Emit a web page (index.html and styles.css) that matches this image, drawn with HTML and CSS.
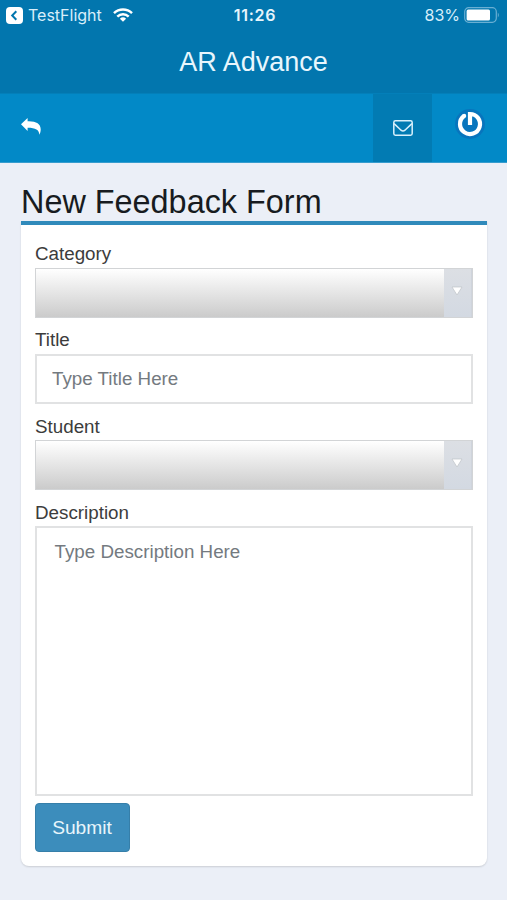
FILE: index.html
```html
<!DOCTYPE html>
<html lang="en">
<head>
<meta charset="utf-8">
<title>AR Advance</title>
<link rel="stylesheet" href="styles.css">
</head>
<body>
<header class="top">
  <div class="status">
    <div class="status-left">
      <svg class="back-app" viewBox="0 0 17 17"><rect width="17" height="17" rx="4" fill="#fff"/><path d="M10.300 4.300 6.200 8.500l4.100 4.200" fill="none" stroke="#0276ae" stroke-width="2"/></svg>
      <span class="app">TestFlight</span>
      <svg class="wifi" viewBox="0 0 20 14"><g fill="none" stroke="#fff" stroke-width="2.5"><path d="M1 5.100a13 13 0 0 1 18 0"/><path d="M4.300 8.600a8.200 8.200 0 0 1 11.400 0"/></g><path d="M6.900 10.700a4.600 4.600 0 0 1 6.200 0L10 13.800z" fill="#fff"/></svg>
    </div>
    <span class="clock">11:26</span>
    <div class="status-right">
      <span class="percent">83%</span>
      <svg class="battery" viewBox="0 0 36 16"><rect x=".7" y=".7" width="31.6" height="14.6" rx="4" fill="none" stroke="#69afd3" stroke-width="1.2"/><rect x="2.6" y="2.6" width="23.4" height="10.8" rx="1.5" fill="#fff"/><path d="M33.800 5.500q2 2.500 0 5z" fill="#69afd3"/></svg>
    </div>
  </div>
  <h1 class="brand">AR Advance</h1>
</header>
<nav class="toolbar">
  <a class="reply"><svg viewBox="0 0 20 17"><path d="M0 6.200 6.600 0v3.200c8.500-.3 13.100 2.500 13.100 8 0 2.200-.5 4-1.300 5.600-.5-5-3.600-7-11.800-7v3.200z" fill="#fff"/></svg></a>
  <a class="mail"><svg viewBox="0 0 20 16"><g fill="none" stroke="#d9f1fc" stroke-width="1.500"><rect x=".8" y=".8" width="18.400" height="14.400" rx="1.600"/><path d="M1 3.600c2.500 2.200 4.800 4.500 7 6.600q2 1.600 4 0c2.200-2.100 4.500-4.400 7-6.600"/></g></svg></a>
  <a class="power"><svg viewBox="0 0 32 32"><circle cx="16" cy="16" r="15" fill="#0875bd"/><path d="M10 8a10 10 0 1 0 6-2v11" fill="none" stroke="#fff" stroke-width="4.200"/><circle cx="10.200" cy="7.900" r="2.050" fill="#fff"/></svg></a>
</nav>
<main class="content">
  <h2 class="heading">New Feedback Form</h2>
  <form class="panel">
    <label class="label">Category</label>
    <div class="select"><span class="arrow"><svg viewBox="0 0 12 10"><path d="M1 1h10L6 9z" fill="#fff" stroke="#bfc3c7" stroke-width=".7"/></svg></span></div>
    <label class="label" for="title">Title</label>
    <input class="field" id="title" type="text" placeholder="Type Title Here">
    <label class="label">Student</label>
    <div class="select"><span class="arrow"><svg viewBox="0 0 12 10"><path d="M1 1h10L6 9z" fill="#fff" stroke="#bfc3c7" stroke-width=".7"/></svg></span></div>
    <label class="label" for="description">Description</label>
    <textarea class="field area" id="description" placeholder="Type Description Here"></textarea>
    <button class="submit" type="button">Submit</button>
  </form>
</main>
</body>
</html>
```
FILE: styles.css
```css
* { box-sizing: border-box; }
body {
  margin: 0;
  min-height: 900px;
  background: #ebeff7;
  font-family: "Liberation Sans", Arial, sans-serif;
  color: #3c3c3c;
}
svg { display: block; }
.top { height: 93px; background: #0276ae; color: #fff; }
.status {
  display: grid;
  grid-template-columns: 1fr auto 1fr;
  align-items: center;
  height: 30px;
  padding: 0 7px 0 6px;
  font: 16px/30px Inter, sans-serif;
}
.status-left, .status-right { display: flex; align-items: center; }
.status-right { justify-content: flex-end; }
.back-app { width: 17px; height: 17px; }
.app { margin-left: 5px; color: #d8eefa; }
.wifi { width: 20px; height: 14px; margin-left: 11px; }
.clock { font-weight: 600; color: #e6f5fc; letter-spacing: .7px; padding-left: 4px; }
.percent { color: #d8eefa; }
.battery { width: 36px; height: 16px; margin-left: 4px; }
.brand {
  margin: 0;
  text-align: center;
  font-size: 27px;
  font-weight: 400;
  line-height: 65px;
  color: #e8f6fd;
}
.toolbar {
  display: flex;
  height: 70px;
  background: #0289c7;
  border-top: 1px solid #037fb9;
  border-bottom: 1px solid #369cce;
}
.reply { flex: 1; padding: 24px 0 0 21px; }
.reply svg { width: 20px; height: 17px; }
.mail { width: 59px; padding: 26px 0 0 20px; background: #027bb3; }
.mail svg { width: 20px; height: 16px; }
.power { width: 75px; padding: 14px 0 0 22px; }
.power svg { width: 32px; height: 32px; }
.content { padding: 18px 20px 0 21px; }
.heading {
  margin: 0;
  height: 40px;
  font-size: 32.4px;
  font-weight: 400;
  line-height: 42px;
  color: #171b20;
  white-space: nowrap;
}
.panel {
  height: 645px;
  padding: 15px 14px 0 13.5px;
  background: #fff;
  border-top: 4px solid #308abb;
  border-radius: 0 0 8px 8px;
  box-shadow: 0 1px 2px rgba(0, 0, 0, .14);
}
.label { display: block; height: 27.5px; padding-left: .5px; font-size: 18.8px; line-height: 27px; }
.select {
  display: flex;
  justify-content: flex-end;
  height: 50px;
  margin-bottom: 8.8px;
  border: 1px solid #d2d4d6;
  background: linear-gradient(#fff, #cbcbcb);
}
.arrow {
  width: 28px;
  padding: 17px 0 0 7px;
  background: linear-gradient(#dcdfe4, #d3d9e2);
  border-right: 1px solid #cfd4dc;
}
.arrow svg { width: 12px; height: 10px; }
.field {
  display: block;
  width: 100%;
  height: 50px;
  margin: 0 0 8.8px;
  padding: 1px 15.5px 0;
  border: 2px solid #e1e2e3;
  border-radius: 0;
  background: #fff;
  font: 18.8px "Liberation Sans", Arial, sans-serif;
}
.field::placeholder { color: #747a80; opacity: 1; }
.area { height: 270px; margin-bottom: 6.5px; padding: 12.5px 18px; resize: none; }
.submit {
  display: block;
  width: 95px;
  height: 49px;
  padding: 1px 0 0;
  border: 1px solid #367fa9;
  border-radius: 4px;
  background: #3c8dbc;
  color: #e8f5fb;
  font: 19.2px "Liberation Sans", Arial, sans-serif;
}
```
